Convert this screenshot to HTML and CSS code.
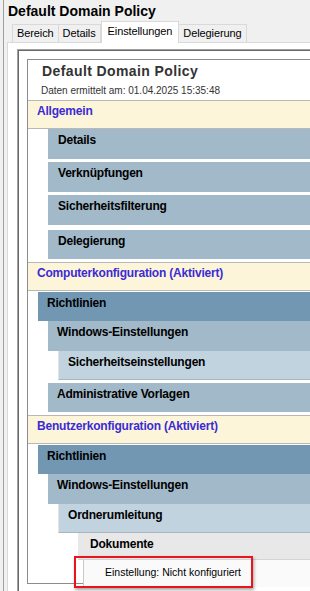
FILE: index.html
```html
<!DOCTYPE html>
<html>
<head>
	<meta charset="utf-8">
	<title>Default Domain Policy</title>
	<link rel="stylesheet" href="styles.css">
</head>
<body>
	<div class="window">
		<div class="title">Default Domain Policy</div>
		<div class="tabs">
			<div class="tab">Bereich</div>
			<div class="tab">Details</div>
			<div class="tab active">Einstellungen</div>
			<div class="tab">Delegierung</div>
		</div>
		<div class="panel">
			<div class="browser">
				<div class="report">
					<div class="report-title">Default Domain Policy</div>
					<div class="report-date">Daten ermittelt am: 01.04.2025 15:35:48</div>

					<!-- Allgemein -->
					<div class="he0">Allgemein</div>
					<div class="he1">Details</div>
					<div class="he1">Verknüpfungen</div>
					<div class="he1 wide-gap">Sicherheitsfilterung</div>
					<div class="he1 last">Delegierung</div>

					<!-- Computer -->
					<div class="he0">Computerkonfiguration (Aktiviert)</div>
					<div class="he1h">Richtlinien</div>
					<div class="he1 lvl2">Windows-Einstellungen</div>
					<div class="he2">Sicherheitseinstellungen</div>
					<div class="he1 lvl2 last">Administrative Vorlagen</div>

					<!-- Benutzer -->
					<div class="he0">Benutzerkonfiguration (Aktiviert)</div>
					<div class="he1h">Richtlinien</div>
					<div class="he1 lvl2 flat">Windows-Einstellungen</div>
					<div class="he2">Ordnerumleitung</div>
					<div class="he4">Dokumente</div>
					<div class="setting">
						Einstellung: Nicht konfiguriert
						<div class="mark"></div>
					</div>
				</div>
			</div>
		</div>
	</div>
</body>
</html>
```

FILE: styles.css
```css
html,body{
	height:100%;
	overflow:hidden;
}
body{
	margin:0;
	background:#f0f0f0;
	font-family:"Liberation Sans",Arial,sans-serif;
	color:#000;
}
.window{
	margin-left:3px;
	height:591px;
	border-left:1px solid #a0a0a0;
}
.title{
	padding:3px 0 0 4px;
	font-size:14px;
	line-height:17px;
	font-weight:bold;
}
/* Reiter */
.tabs{
	display:flex;
	align-items:flex-end;
	height:21px;
	margin-top:1px;
	padding-left:8px;
}
.tab{
	height:18px;
	box-sizing:border-box;
	padding:0 4px;
	font-size:11px;
	line-height:17px;
	letter-spacing:-0.1px;
	border:1px solid #d9d9d9;
	border-bottom:none;
	border-left:none;
	background:#f0f0f0;
}
.tab:first-child{
	border-left:1px solid #d9d9d9;
}
.tab.active{
	height:22px;
	margin-bottom:-1px;
	padding:1px 6px 0;
	background:#fff;
	border-left:1px solid #d9d9d9;
	position:relative;
	z-index:1;
}
.panel{
	margin-left:3px;
	height:550px;
	border-top:1px solid #d9d9d9;
	border-left:1px solid #d9d9d9;
	background:#fff;
	padding:6px 0 0 9px;
}
.browser{
	height:560px;
	border-top:1px solid #a0a0a0;
	border-left:1px solid #a0a0a0;
	box-shadow:inset 1px 1px 0 #696969;
	background:#fff;
	padding:9px 0 0 9px;
}
/* Bericht */
.report{
	border:1px solid #8c8c8c;
	border-right:none;
	height:523px;
	position:relative;
}
.report-title{
	padding:3px 0 0 14px;
	font-size:14px;
	line-height:17px;
	letter-spacing:0.4px;
	font-weight:bold;
	color:#333;
}
.report-date{
	margin:5px 0 3px 13px;
	font-size:10px;
	line-height:12px;
	color:#333;
}
.he0,.he1,.he1h,.he2,.he4{
	box-sizing:border-box;
	height:30px;
	padding:4px 0 0 10px;
	font-size:12px;
	line-height:15px;
	font-weight:bold;
	letter-spacing:-0.2px;
}
.he0{
	height:29px;
	padding:3px 0 0 9px;
	background:#fdf5da;
	color:#3a2bd6;
	border-top:1px solid #b8b8b8;
	border-bottom:1px solid #b8b8b8;
}
.he0 + .he1h{
	margin-top:1px;
	height:29px;
}
.he1{
	margin-left:20px;
	margin-bottom:3px;
	background:#a2b9c9;
}
.he1.wide-gap{
	margin-bottom:5px;
}
.he1.last{
	height:29px;
}
.he1.lvl2{
	margin-left:20px;
	margin-bottom:0;
	padding-left:9px;
}
.he1.lvl2.last{
	margin-top:3px;
	margin-bottom:3px;
}
.he1h{
	margin-left:10px;
	padding-left:9px;
	background:#7297b3;
}
.he2{
	margin-left:30px;
	height:29px;
	padding-left:9px;
	background:#c0d3df;
	border-left:1px solid #e4e4e4;
	border-bottom:1px solid #a9b4bc;
}
.he4{
	margin-left:50px;
	height:27px;
	padding:4px 0 0 12px;
	background:#e8e8e8;
	border-bottom:1px solid #d4d4d4;
}
.setting{
	margin-left:55px;
	height:21px;
	padding:6px 0 0 21px;
	font-size:10.5px;
	line-height:12px;
	background:#fafafa;
	border-left:1px solid #c8c8c8;
}
/* rote Markierung */
.mark{
	position:absolute;
	left:46px;
	top:496px;
	width:175px;
	height:28px;
	border:2px solid #e8161b;
	box-shadow:1px 2px 3px rgba(0,0,0,0.35);
}
```
